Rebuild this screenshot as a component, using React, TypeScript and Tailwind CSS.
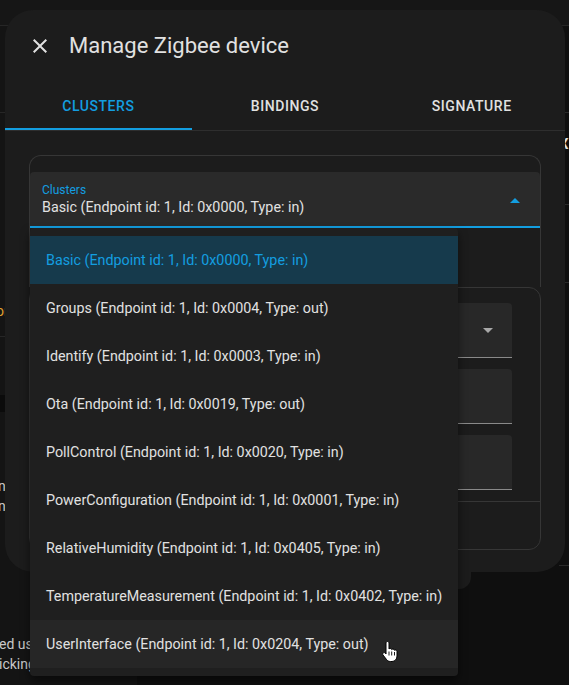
import React from "react";

const clusters = [
  "Basic (Endpoint id: 1, Id: 0x0000, Type: in)",
  "Groups (Endpoint id: 1, Id: 0x0004, Type: out)",
  "Identify (Endpoint id: 1, Id: 0x0003, Type: in)",
  "Ota (Endpoint id: 1, Id: 0x0019, Type: out)",
  "PollControl (Endpoint id: 1, Id: 0x0020, Type: in)",
  "PowerConfiguration (Endpoint id: 1, Id: 0x0001, Type: in)",
  "RelativeHumidity (Endpoint id: 1, Id: 0x0405, Type: in)",
  "TemperatureMeasurement (Endpoint id: 1, Id: 0x0402, Type: in)",
  "UserInterface (Endpoint id: 1, Id: 0x0204, Type: out)",
];

const tabs = ["Clusters", "Bindings", "Signature"];

function CloseIcon() {
  return (
    <svg width="24" height="24" viewBox="0 0 24 24" fill="#e1e1e1">
      <path d="M19,6.41L17.59,5L12,10.59L6.41,5L5,6.41L10.59,12L5,17.59L6.41,19L12,13.41L17.59,19L19,17.59L13.41,12L19,6.41Z" />
    </svg>
  );
}

function Caret({ up, color }: { up?: boolean; color: string }) {
  return (
    <svg width="10" height="5" viewBox="0 0 10 5" fill={color}>
      {up ? <path d="M0 5 L5 0 L10 5 Z" /> : <path d="M0 0 L5 5 L10 0 Z" />}
    </svg>
  );
}

function HandCursor() {
  return (
    <svg width="18" height="24" viewBox="0 0 18 24">
      <path
        d="M6.5 1.5 C7.3 1.5 8 2.2 8 3 V9 C8.3 8.6 8.8 8.4 9.3 8.4 C10 8.4 10.6 8.9 10.7 9.6 C11 9.2 11.5 9 12 9 C12.8 9 13.4 9.6 13.5 10.3 C13.8 10.1 14.1 10 14.5 10 C15.3 10 16 10.7 16 11.5 V16 C16 19 14 21.5 11 21.5 H9.5 C7.8 21.5 6.6 20.8 5.6 19.6 L2 15 C1.5 14.3 1.6 13.4 2.3 12.9 C3 12.4 3.9 12.6 4.4 13.2 L5 14 V3 C5 2.2 5.7 1.5 6.5 1.5 Z"
        fill="#ffffff"
        stroke="#000000"
        strokeWidth="1"
      />
      <path d="M8 11.5 V15.5 M10.7 11.5 V15.5 M13.5 12 V15.5" stroke="#000000" strokeWidth="0.9" />
    </svg>
  );
}

function Field({ select }: { select?: boolean }) {
  return (
    <div className="flex h-[55px] items-center justify-end rounded-t border-b border-[#8a8a8a] bg-[#282828] pr-[19px]">
      {select && <Caret color="#a8a8a8" />}
    </div>
  );
}

export default function App() {
  return (
    <div className="relative h-[685px] w-[569px] overflow-hidden bg-[#0f0f0f] font-['Roboto',sans-serif] text-[#e1e1e1]">
      {/* page behind the dialog */}
      <div className="flex h-full flex-col">
        <div className="h-[26px] shrink-0 border-b border-[#262626] bg-[#161616]" />
        <div className="flex min-h-0 flex-1">
          <div className="flex w-[137px] shrink-0 flex-col bg-[#141414]">
            <div className="h-[87px] border-b border-[#262626]" />
            <div className="flex h-[224px] items-end border-b border-[#262626] pb-[17px] text-[14px] leading-[16px] text-[#e0a030]">
              <span className="-ml-[4px]">on</span>
            </div>
            <div className="mt-[58px] h-[17px] bg-[#0b0b0b]" />
            <div className="mt-[64px] flex flex-col text-[14px] leading-[20px] text-[#c8c8c8]">
              <span className="-ml-[2px]">n</span>
              <span className="-ml-[2px]">ne</span>
            </div>
            <div className="mt-auto flex w-[30px] flex-col overflow-hidden pb-[11px] text-[14px] leading-[20px] text-[#c8c8c8]">
              <span className="-ml-[1px] whitespace-nowrap">ed us</span>
              <span className="-ml-[1px] whitespace-nowrap">icking</span>
            </div>
          </div>
          <div className="flex min-w-0 flex-1">
            <div className="w-[334px] shrink-0">
              <div className="h-[563px] rounded-b-xl bg-[#1c1c1c]" />
            </div>
            <div className="flex min-w-0 flex-1 flex-col pl-[88px] text-[15px] font-bold">
              <div className="h-[87px] border-b border-[#2a2a2a]" />
              <div className="flex h-[92px] flex-col justify-between border-b border-[#2a2a2a] py-[20px] text-[#dddddd]">
                <span>X</span>
                <span className="font-normal">r</span>
              </div>
              <div className="flex h-[78px] flex-col justify-between border-b border-[#2a2a2a] py-[10px]">
                <span className="text-[#5b7cff]">›</span>
                <span className="text-[#d08030]">!</span>
              </div>
              <div className="flex h-[70px] flex-col justify-between py-[8px]">
                <span className="text-[#5b7cff]">›</span>
                <span className="text-[#d08030]">!</span>
              </div>
              <div className="mt-[212px] border-b border-[#2a2a2a]" />
            </div>
          </div>
        </div>
      </div>

      {/* dialog */}
      <div className="absolute left-[5px] top-[10px] flex h-[562px] w-[560px] flex-col overflow-hidden rounded-[28px] bg-[#1c1c1c]">
        <div className="flex h-[72px] shrink-0 items-center gap-[17px] pl-[23px]">
          <CloseIcon />
          <h2 className="text-[22px] font-normal leading-[28px] text-[#e1e1e1]">Manage Zigbee device</h2>
        </div>
        <div className="flex h-[49px] shrink-0 border-b border-[#2e2e2e]">
          {tabs.map((t, i) => (
            <div key={t} className="flex flex-1 flex-col">
              <div
                className={
                  "flex flex-1 items-center justify-center pt-[2px] text-[14px] font-medium uppercase tracking-[0.04em] " +
                  (i === 0 ? "text-[#139ee0]" : "text-[#e1e1e1]")
                }
              >
                {t}
              </div>
              <div className={i === 0 ? "h-[2px] bg-[#139ee0]" : "h-[2px]"} />
            </div>
          ))}
        </div>
        <div className="flex flex-col px-6 pt-6">
          <div className="h-[132px] rounded-t-xl border border-b-0 border-[#363636] pt-4">
            <div className="flex h-[56px] items-start justify-between rounded-t border-b-2 border-[#139ee0] bg-[#2a2a2a] pl-3 pr-5">
              <div className="flex flex-col pt-[11px]">
                <span className="text-[12px] leading-[14px] text-[#139ee0]">Clusters</span>
                <span className="text-[14.3px] leading-[20px] text-[#e1e1e1]">{clusters[0]}</span>
              </div>
              <div className="pt-[26px]">
                <Caret up color="#139ee0" />
              </div>
            </div>
          </div>
          <div className="h-[263px] rounded-xl border border-[#363636] pt-[15px]">
            <div className="flex flex-col gap-[11px] pl-[16px] pr-[28px]">
              <Field select />
              <Field />
              <Field />
            </div>
            <div className="mt-[11px] h-px bg-[#363636]" />
          </div>
        </div>
      </div>

      {/* open select menu */}
      <div className="absolute left-[30px] top-[228px] w-[428px] rounded bg-[#1f1f1f] py-2 shadow-[0_5px_10px_rgba(0,0,0,0.5)]">
        {clusters.map((c, i) => (
          <div
            key={c}
            className={
              "flex h-12 items-center whitespace-nowrap px-4 pt-[2px] text-[14.3px] " +
              (i === 0
                ? "bg-[#163a4c] text-[#139ee0]"
                : i === clusters.length - 1
                ? "bg-[#262626] text-[#e1e1e1]"
                : "text-[#e1e1e1]")
            }
          >
            {c}
          </div>
        ))}
      </div>

      {/* mouse pointer */}
      <div className="absolute left-[381px] top-[640px]">
        <HandCursor />
      </div>
    </div>
  );
}
